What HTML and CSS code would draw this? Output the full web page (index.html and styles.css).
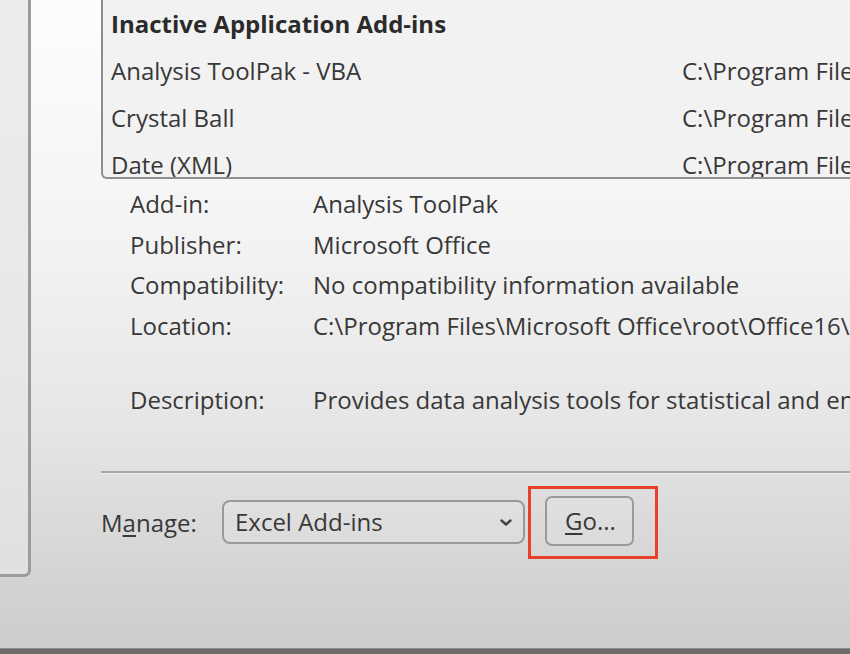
FILE: index.html
```html
<!DOCTYPE html>
<html>
<head>
<meta charset="utf-8">
<link rel="stylesheet" href="styles.css">
</head>
<body>
<div class="window">
  <div class="nav"></div>
  <div class="main">
    <div class="listbox">
      <div class="lb-row lb-head">Inactive Application Add-ins</div>
      <div class="lb-row"><span class="lb-name">Analysis ToolPak - VBA</span><span class="lb-path">C:\Program Files\Microsoft Office\root\Office16\Library\Analysis\ATPVBAEN.XLAM</span></div>
      <div class="lb-row"><span class="lb-name">Crystal Ball</span><span class="lb-path">C:\Program Files\Oracle\Crystal Ball\CBall.xla</span></div>
      <div class="lb-row"><span class="lb-name">Date (XML)</span><span class="lb-path">C:\Program Files\Common Files\Microsoft Shared\Smart Tag\MOFL.DLL</span></div>
    </div>
    <div class="details">
      <div class="d-row"><span class="d-label">Add-in:</span><span class="d-value">Analysis ToolPak</span></div>
      <div class="d-row"><span class="d-label">Publisher:</span><span class="d-value">Microsoft Office</span></div>
      <div class="d-row"><span class="d-label">Compatibility:</span><span class="d-value">No compatibility information available</span></div>
      <div class="d-row"><span class="d-label">Location:</span><span class="d-value">C:\Program Files\Microsoft Office\root\Office16\Library\Analysis\ANALYS32.XLL</span></div>
      <div class="d-row d-desc"><span class="d-label">Description:</span><span class="d-value">Provides data analysis tools for statistical and engineering analysis</span></div>
    </div>
    <div class="sep"></div>
    <div class="manage">
      <span class="manage-label">M<u>a</u>nage:</span>
      <div class="select">
        <span class="select-text">Excel Add-ins</span>
        <svg class="chev" width="14" height="9" viewBox="0 0 14 9"><path d="M2.5 2.5 L7 6.5 L11.5 2.5" fill="none" stroke="#444" stroke-width="2.4" stroke-linecap="round" stroke-linejoin="round"/></svg>
      </div>
      <div class="highlight">
        <div class="go-btn"><u>G</u>o...</div>
      </div>
    </div>
  </div>
</div>
<div class="bottom-bar"></div>
</body>
</html>
```

FILE: styles.css
```css
html, body {
  margin: 0;
  padding: 0;
  width: 850px;
  height: 654px;
  overflow: hidden;
}
body {
  font-family: "Open Sans", "Noto Sans", sans-serif;
  font-size: 24px;
  color: #383838;
  background: #d0d0d0;
}
.window {
  display: flex;
  height: 648px;
  background: linear-gradient(to bottom, #fdfdfd 0%, #f4f4f4 35%, #e6e6e6 65%, #d3d3d3 90%, #cdcdcd 100%);
  overflow: hidden;
}
.nav {
  flex: 0 0 28px;
  height: 574px;
  background: linear-gradient(to bottom, #ededed 0%, #e8e8e8 60%, #e0e0e0 100%);
  border-right: 3px solid #9c9c9c;
  border-bottom: 3px solid #9c9c9c;
  border-bottom-right-radius: 7px;
}
.main {
  flex: 1;
  padding-left: 70px;
  min-width: 0;
}
.listbox {
  width: 900px;
  height: 177px;
  background: #f2f2f2;
  border-left: 2px solid #8e8e8e;
  border-bottom: 2px solid #8e8e8e;
  border-bottom-left-radius: 6px;
  overflow: hidden;
  padding-left: 8px;
  box-sizing: content-box;
}
.lb-row {
  height: 47px;
  line-height: 47px;
  display: flex;
  white-space: nowrap;
}
.lb-head {
  font-weight: 700;
  color: #2b2b2b;
}
.lb-name {
  flex: 0 0 571px;
}
.details {
  padding-left: 29px;
  margin-top: 5px;
}
.d-row {
  display: flex;
  height: 40.5px;
  line-height: 40.5px;
  white-space: nowrap;
}
.d-label {
  flex: 0 0 183px;
}
.d-desc {
  margin-top: 34px;
}
.sep {
  margin-top: 50px;
  height: 2px;
  background: #a8a8a8;
  border-bottom: 1px solid #f0f0f0;
}
.manage {
  display: flex;
  align-items: center;
  margin-top: 12px;
}
.manage-label {
  width: 121px;
}
.manage-label u, .go-btn u {
  text-underline-offset: 3px;
}
.select {
  width: 278px;
  height: 40px;
  border: 2px solid #999;
  border-radius: 8px;
  display: flex;
  align-items: center;
  justify-content: space-between;
  padding: 0 10px 0 11px;
  box-sizing: content-box;
  background: rgba(255,255,255,0.12);
}
.select-text {
  line-height: 40px;
}
.chev {
  display: block;
}
.highlight {
  margin-left: 3px;
  border: 3px solid #e8412a;
  padding: 7px 21px 10px 14px;
}
.go-btn {
  border: 2px solid #9a9a9a;
  border-radius: 7px;
  display: flex;
  align-items: center;
  padding-left: 18px;
  box-sizing: border-box;
  width: 89px;
  height: 50px;
  background: rgba(255,255,255,0.1);
}
.bottom-bar {
  height: 6px;
  background: #6c6c6c;
  border-top: 1px solid #8a8a8a;
}
```
